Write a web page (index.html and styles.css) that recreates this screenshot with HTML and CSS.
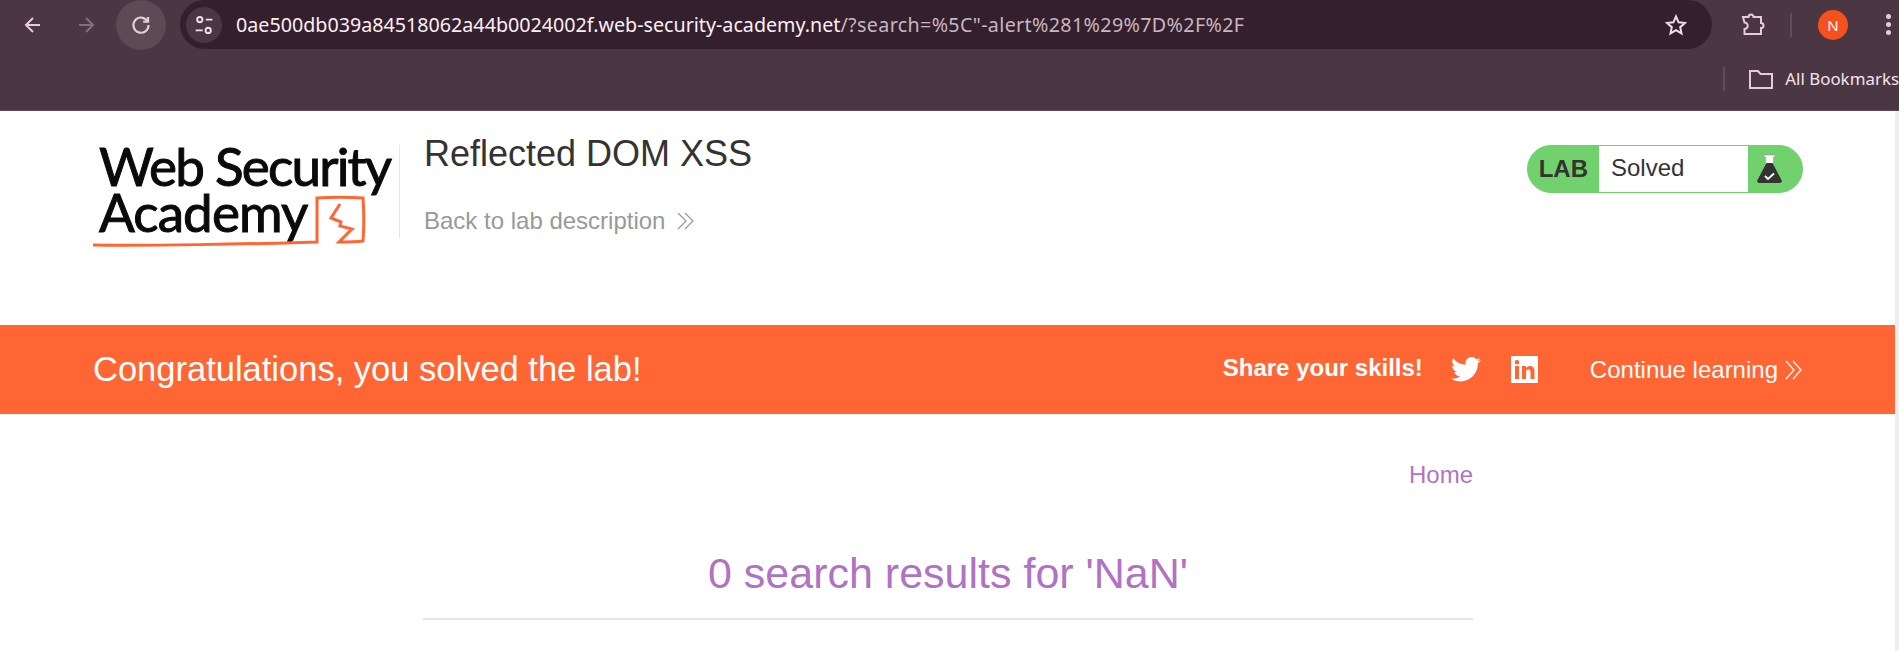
FILE: index.html
```html
<!DOCTYPE html>
<html>
<head>
  <title>Reflected DOM XSS</title>
  <link rel="stylesheet" href="styles.css">
</head>
<body>

<!-- Browser toolbar -->
<div class="browser">
  <div class="toolbar">
    <svg class="nav-icon back" width="24" height="24" viewBox="0 0 24 24"><path d="M19 12H5M12 5l-7 7 7 7"/></svg>
    <svg class="nav-icon forward" width="24" height="24" viewBox="0 0 24 24"><path d="M5 12h14M12 5l7 7-7 7"/></svg>
    <div class="reload">
      <svg class="nav-icon" width="26" height="26" viewBox="0 0 24 24"><path d="M18 8.5A7 7 0 1 0 19 12M18.5 4.5v4.500H14"/></svg>
    </div>
    <div class="address">
      <div class="site-info">
        <svg width="24" height="24" viewBox="0 0 20 20"><circle cx="6.5" cy="5.5" r="2.2"/><path d="M11.5 5.5H17M3 14.5h6"/><circle cx="13.5" cy="14.5" r="2.2"/></svg>
      </div>
      <span class="url">0ae500db039a84518062a44b0024002f.web-security-academy.net<span class="url-path">/?search=%5C"-alert%281%29%7D%2F%2F</span></span>
      <svg class="star" width="24" height="24" viewBox="0 0 24 24"><path d="M12 3.5l2.6 5.8 6.3.7-4.7 4.2 1.3 6.2-5.5-3.2-5.500 3.2 1.3-6.2L3.1 10l6.3-.7z"/></svg>
    </div>
    <svg class="puzzle" width="26" height="26" viewBox="0 0 26 26"><path d="M3 5h5.500a2.500 2.500 0 0 1 5 0H21v6a2.500 2.500 0 0 1 0 5v6H4.500v-5a2.800 2.800 0 0 0 0-6.500L3 5z"/></svg>
    <div class="divider"></div>
    <div class="avatar">N</div>
    <div class="dots"><i></i><i></i><i></i></div>
  </div>
  <div class="bookmarks">
    <div class="divider"></div>
    <svg class="folder" width="24" height="20" viewBox="0 0 24 20"><path d="M1 2h8l2.500 3H23v14H1z"/></svg>
    <span>All Bookmarks</span>
  </div>
</div>

<div class="page">
  <!-- Lab header -->
  <div class="lab-header">
    <div class="logo">
      <svg class="logo-mark" width="306" height="104" viewBox="0 0 306 104"><path class="swoosh" d="M0 100c50 1 160-1 224-3V53c16-1 32-1 46 0 1 14 1 30 0 43-8 1-16 1-24 1l13-13-12-3 1-4-10-4 9-14"/></svg>
      <div class="logo-text">Web Security<br><span class="logo-academy">Academy</span></div>
    </div>
    <div class="lab-title">
      <h2>Reflected DOM XSS</h2>
      <a class="back-link">Back to lab description
        <svg width="18" height="18" viewBox="0 0 18 18"><path d="M1 1l8 8-8 8M8 1l8 8-8 8"/></svg>
      </a>
    </div>
    <div class="lab-status">
      <span class="lab-label">LAB</span>
      <span class="lab-state">Solved</span>
      <span class="lab-flask">
        <svg width="25" height="30" viewBox="0 0 25 30"><path class="flask-neck" d="M7 1h11v2h-1.500v7h-8V3H7z"/><path class="flask-body" d="M9.500 9h6l9 17q1 3-2 3H2.500q-3 0-2-3z"/><path class="flask-tick" d="M8 22l3 3 6-5.500"/></svg>
      </span>
    </div>
  </div>

  <!-- Solved banner -->
  <div class="banner">
    <h4>Congratulations, you solved the lab!</h4>
    <div class="share">
      <span class="share-text">Share your skills!</span>
      <svg class="social" width="30" height="25" viewBox="0 0 24 20"><path d="M24 2.400a9.800 9.800 0 0 1-2.800.8A4.900 4.900 0 0 0 23.300.500a9.800 9.800 0 0 1-3.100 1.200 4.900 4.900 0 0 0-8.400 4.500A14 14 0 0 1 1.700.900a4.900 4.900 0 0 0 1.500 6.600 4.900 4.900 0 0 1-2.200-.6c0 2.400 1.700 4.400 3.900 4.900a4.900 4.900 0 0 1-2.200.1 4.900 4.900 0 0 0 4.600 3.400A9.900 9.900 0 0 1 0 17.300 14 14 0 0 0 7.500 19.500c9.100 0 14.300-7.700 14-14.600A10 10 0 0 0 24 2.400z"/></svg>
      <svg class="social linkedin" width="27" height="27" viewBox="0 0 27 27"><path fill-rule="evenodd" d="M1 0h25a1 1 0 0 1 1 1v25a1 1 0 0 1-1 1H1a1 1 0 0 1-1-1V1a1 1 0 0 1 1-1zM4 10v13h4V10zM6 4a2.300 2.300 0 1 0 0 4.600A2.300 2.300 0 0 0 6 4zM11 10v13h4v-7c0-3.500 4.500-3.700 4.500 0v7h4v-8c0-6-6.200-6-8.500-3v-2z"/></svg>
    </div>
    <a class="continue">Continue learning
      <svg width="18" height="20" viewBox="0 0 18 20"><path d="M1 1l8 9-8 9M8 1l8 9-8 9"/></svg>
    </a>
  </div>

  <!-- Blog content -->
  <div class="content">
    <div class="nav-links"><a>Home</a></div>
    <h1>0 search results for 'NaN'</h1>
    <hr>
  </div>
</div>

</body>
</html>
```

FILE: styles.css
```css
* {
  box-sizing: border-box;
}

html, body {
  height: 100%;
}

body {
  margin: 0;
  font-family: "Liberation Sans", Arial, sans-serif;
  background-color: #efefef; /* scrollbar track */
  overflow: hidden;
}

/* browser toolbar */
.browser {
  height: 111px;
  background-color: #4a3743;
  border-bottom: 1px solid #5f4d59;
  color: #f3e3ec;
}

.toolbar {
  height: 49px;
  display: flex;
  align-items: center;
}

.nav-icon {
  fill: none;
  stroke: #e6ccd9;
  stroke-width: 2;
}

.back {
  margin-left: 21px;
}

.forward {
  margin-left: 29px;
  stroke: #836f7c;
}

.reload {
  width: 50px;
  height: 50px;
  border-radius: 50%;
  margin-left: 18px;
  background-color: #5c4a55;
  display: flex;
  align-items: center;
  justify-content: center;
}

.address {
  width: 1532px;
  height: 49px;
  margin-left: 14px;
  border-radius: 25px;
  background-color: #33202c;
  display: flex;
  align-items: center;
}

.site-info {
  width: 36px;
  height: 36px;
  margin-left: 6px;
  border-radius: 50%;
  background-color: #4a3743;
  display: flex;
  align-items: center;
  justify-content: center;
}

.site-info svg {
  fill: none;
  stroke: #f0dde8;
  stroke-width: 1.6;
}

.url {
  margin-left: 14px;
  font-family: "Noto Sans", "Open Sans", sans-serif;
  font-size: 19.7px;
  color: #fbeef5;
  white-space: nowrap;
  flex: 1;
}

.url-path {
  color: #c9b6c2;
  letter-spacing: .35px;
}

.star {
  margin-right: 24px;
  fill: none;
  stroke: #f0dde8;
  stroke-width: 2;
}

.puzzle {
  margin-left: 28px;
  fill: none;
  stroke: #e6ccd9;
  stroke-width: 2;
}

.toolbar .divider {
  margin-left: 24px;
}

.divider {
  width: 2px;
  height: 24px;
  background-color: #5f4d59;
}

.avatar {
  width: 30px;
  height: 30px;
  margin-left: 26px;
  border-radius: 50%;
  background-color: #f4511e;
  color: #ffffff;
  font-size: 15px;
  display: flex;
  align-items: center;
  justify-content: center;
  font-family: "Noto Sans", sans-serif;
}

.dots {
  margin-left: 38px;
  display: flex;
  flex-direction: column;
  gap: 3px;
}

.dots i {
  display: block;
  width: 5px;
  height: 5px;
  border-radius: 50%;
  background-color: #e6ccd9;
}

.bookmarks {
  height: 61px;
  padding-bottom: 2px;
  display: flex;
  align-items: center;
  justify-content: flex-end;
  font-family: "Noto Sans", sans-serif;
  font-size: 16.9px;
  white-space: nowrap;
  overflow: hidden;
}

.bookmarks .divider {
  margin-right: 24px;
}

.folder {
  margin-right: 12px;
  fill: none;
  stroke: #e6ccd9;
  stroke-width: 2;
}

/* lab header */
.page {
  width: 1895px;
  height: calc(100% - 111px);
  background-color: #ffffff;
}

.lab-header {
  height: 214px;
  padding: 23px 92px 0 93px;
  display: flex;
  align-items: flex-start;
}

.logo {
  position: relative;
  width: 307px;
  height: 93px;
  margin-top: 11px;
  border-right: 1px solid #e6e6e6;
  font-family: "Lato", sans-serif;
  font-size: 53px;
  line-height: 46px;
  letter-spacing: -1.8px;
  color: #0a0a0a;
}

.logo-text {
  position: relative;
  margin-top: -2px;
  padding-left: 6px;
  white-space: nowrap;
  -webkit-text-stroke: 1px #0a0a0a;
}

.logo-academy {
  letter-spacing: -.9px;
}

.logo-mark {
  position: absolute;
  left: 0;
  top: 0;
}

.swoosh {
  fill: none;
  stroke: #ff6633;
  stroke-width: 3;
}

.lab-title {
  margin-left: 24px;
  flex: 1;
}

.lab-title h2 {
  margin: 0;
  font-size: 36px;
  font-weight: 400;
  line-height: 40px;
  color: #333332;
}

.back-link {
  display: flex;
  align-items: center;
  gap: 12px;
  margin-top: 33px;
  font-size: 24px;
  color: #999999;
}

.back-link svg, .continue svg {
  fill: none;
  stroke-width: 1.2;
}

.back-link svg {
  stroke: #999999;
}

.lab-status {
  width: 276px;
  height: 48px;
  margin-top: 11px;
  border-radius: 24px;
  border: 1px solid #70d16d;
  background-color: #70d16d;
  display: flex;
  overflow: hidden;
  color: #333332;
  font-size: 24px;
}

.lab-label {
  width: 71px;
  font-weight: 700;
  text-align: right;
  line-height: 46px;
  padding-right: 11px;
}

.lab-state {
  width: 149px;
  background-color: #ffffff;
  line-height: 44px;
  padding-left: 12px;
}

.lab-flask {
  flex: 1;
  padding-left: 9px;
  padding-top: 8px;
}

.flask-neck {
  fill: #ffffff;
  stroke: #999999;
  stroke-width: .6;
}

.flask-body {
  fill: #333332;
}

.flask-tick {
  fill: none;
  stroke: #ffffff;
  stroke-width: 1.8;
}

/* solved banner */
.banner {
  height: 89px;
  padding: 0 92px 0 93px;
  background-color: #ff6633;
  color: #ffffff;
  display: flex;
  align-items: center;
}

.banner h4 {
  margin: 0;
  flex: 1;
  font-size: 34.5px;
  font-weight: 400;
}

.share {
  display: flex;
  align-items: center;
}

.share-text {
  font-size: 24px;
  font-weight: 700;
  margin-right: 28px;
  margin-top: -4px;
}

.social {
  fill: #ffffff;
}

.linkedin {
  margin-left: 30px;
}

.continue {
  margin-left: 52px;
  display: flex;
  align-items: center;
  gap: 7px;
  font-size: 24px;
}

.continue svg {
  stroke: #ffffff;
}

/* blog content */
.content {
  width: 1050px;
  margin-left: 423px;
}

.nav-links {
  margin-top: 47px;
  text-align: right;
  font-size: 24px;
  color: #b073c3;
}

.content h1 {
  margin: 59px 0 0;
  text-align: center;
  font-size: 43px;
  font-weight: 400;
  line-height: 50px;
  color: #b073c3;
}

.content hr {
  margin: 20px 0 0;
  border: none;
  height: 2px;
  background-color: #e6e6e6;
}
```
